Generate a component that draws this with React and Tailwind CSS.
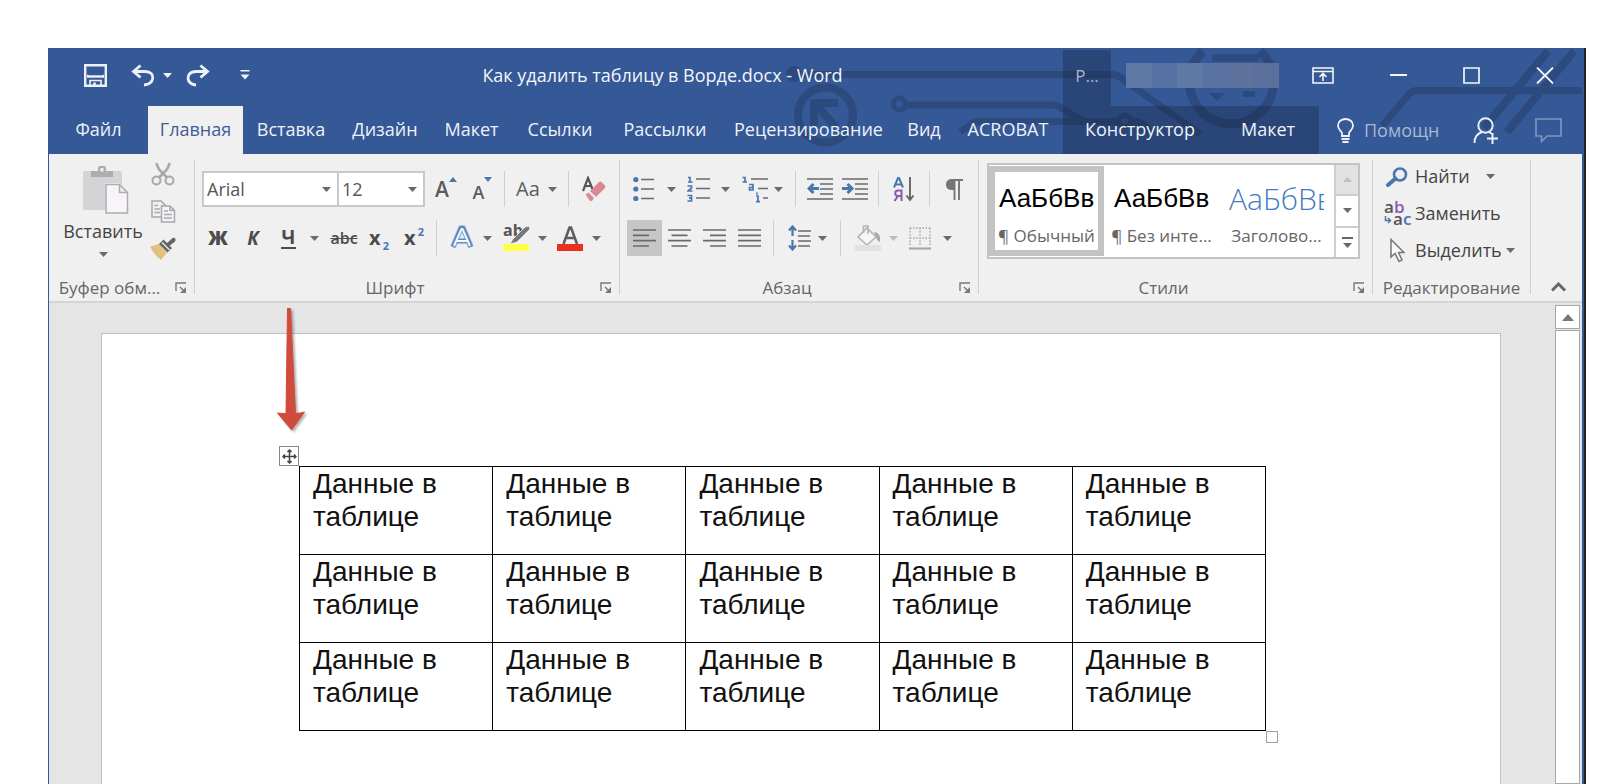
import React from "react";

const UI = "font-['Open_Sans','Noto_Sans',sans-serif]";

const rows = [0, 1, 2];
const cols = [0, 1, 2, 3, 4];

function Caret({ className = "text-[#6a6a6a]" }) {
  return (
    <svg width="9" height="5" viewBox="0 0 9 5" className={`shrink-0 ${className}`} aria-hidden="true">
      <path d="M0 0H9L4.5 5Z" fill="currentColor" />
    </svg>
  );
}

function Sep() {
  return <span className="mx-[6px] h-9 w-px shrink-0 bg-[#cfcfcf]" />;
}

function Tool({ label, w, children, className = "" }) {
  return (
    <button
      type="button"
      aria-label={label}
      className={`flex h-9 shrink-0 items-center justify-center ${w} ${className}`}
    >
      {children}
    </button>
  );
}

function Launcher({ label }) {
  return (
    <button type="button" aria-label={label} className="absolute right-[7px] top-1/2 -translate-y-1/2">
      <svg width="12" height="12" viewBox="0 0 12 12" fill="none" stroke="#777" strokeWidth="1.4" aria-hidden="true">
        <path d="M1 9V1H11" />
        <path d="M5 5L9 9" />
        <path d="M11 5V11H5Z" fill="#777" stroke="none" />
      </svg>
    </button>
  );
}

function Group({ title, launcher = true, className = "", children }) {
  return (
    <section className={`relative flex h-[134px] flex-col border-r border-[#cfcfcf] ${className}`}>
      <div className="h-[115px] shrink-0">{children}</div>
      <div className={`relative flex h-[26px] shrink-0 items-center justify-center text-[17px] leading-6 text-[#666] ${launcher ? "pr-6" : ""}`}>
        <span className="whitespace-nowrap">{title}</span>
        {launcher && <Launcher label={`${title}: параметры`} />}
      </div>
    </section>
  );
}

function Backdrop() {
  return (
    <svg
      className="pointer-events-none absolute right-0 top-0"
      width="802"
      height="105"
      viewBox="780 48 802 105"
      fill="none"
      stroke="#2d4a7f"
      strokeWidth="7"
      aria-hidden="true"
    >
      <circle cx="794" cy="74" r="8" fill="#2d4a7f" stroke="none" />
      <path d="M794 74.5H1112Q1118 75 1124 80L1200 134" />
      <circle cx="825.5" cy="115" r="27.5" strokeWidth="8" />
      <path d="M814 126V103H838M816 105L836 127" strokeWidth="8" />
      <circle cx="899.5" cy="104" r="6" strokeWidth="5" />
      <path d="M906 105H1052Q1058 105 1063 109L1082 121" />
      <path d="M1119 121.5H982Q974 121 970 125L960 132" />
      <circle cx="1125" cy="121" r="5.5" strokeWidth="5" />
      <path d="M1131 121.5H1136Q1144 122 1150 132" />
      <path d="M1203 51A42 42 0 1 0 1260 51" strokeWidth="9" />
      <path d="M1212 58H1259" />
      <path d="M1209 93H1225L1217 101Z" fill="#2d4a7f" stroke="none" />
      <path d="M1243 94H1255" strokeWidth="6" />
      <path d="M1382 126L1409 94Q1412 90.5 1418 90.5H1582" />
      <path d="M1548 51L1484 128M1574 51L1507 132" strokeWidth="8" />
    </svg>
  );
}

function TitleBar() {
  const mosaic = ["bg-[#5f78a6]", "bg-[#5670a4]", "bg-[#6078a4]", "bg-[#5a73a3]", "bg-[#5c719b]", "bg-[#5a6f9c]"];
  return (
    <div className="relative flex h-[58px] items-center pb-1">
      <div className="flex w-[217px] items-center pl-[35px] text-[#eef2f8]">
        <button type="button" aria-label="Сохранить" className="mr-6">
          <svg width="23" height="23" viewBox="0 0 23 23" fill="none" stroke="currentColor" strokeWidth="2.4" aria-hidden="true">
            <path d="M1.2 1.2H21.8V21.8H1.2Z" />
            <path d="M3 12.500H20" strokeWidth="2.400" />
            <path d="M3 11L5 13M20 11L18 13" strokeWidth="1.600" />
            <path d="M6 22V16.500H17V22" strokeWidth="1.600" />
            <path d="M10.500 18.500V22" strokeWidth="2.600" />
          </svg>
        </button>
        <button type="button" aria-label="Отменить" className="mr-[14px] flex items-center gap-2">
          <svg width="24" height="23" viewBox="0 0 24 23" fill="none" stroke="currentColor" strokeWidth="2.8" aria-hidden="true">
            <path d="M9.5 1.5L2.5 7.5L9.5 13.500" />
            <path d="M3 7.500H14.500C20 7.500 22.200 11 21.700 14.500C21 18.500 18 20.500 13 21" />
          </svg>
          <Caret className="text-[#eef2f8]" />
        </button>
        <button type="button" aria-label="Повторить" className="mr-[30px]">
          <svg width="24" height="23" viewBox="0 0 24 23" fill="none" stroke="currentColor" strokeWidth="2.8" aria-hidden="true">
            <path d="M14.5 1.5L21.5 7.5L14.5 13.500" />
            <path d="M21 7.500H10C4 7.500 1.800 11 2 14.500C2.500 18.500 5.500 20.500 10 21" />
          </svg>
        </button>
        <button type="button" aria-label="Настройка панели быстрого доступа">
          <svg width="10" height="10" viewBox="0 0 10 10" fill="currentColor" aria-hidden="true">
            <path d="M0.5 0H9.5V1.5H0.5ZM0.5 4.5H9.5L5 9.5Z" />
          </svg>
        </button>
      </div>
      <h1 className="flex-1 truncate pr-1 text-center text-[18px] text-[#f4f6fa]">Как удалить таблицу в Ворде.docx - Word</h1>
      <div className="mt-0.5 flex h-14 w-12 items-center justify-center self-start bg-black/20 pb-1 text-[17px] text-[#a9b7d2]">Р...</div>
      <div className="ml-[15px] flex h-[25px] w-[153px]">
        {mosaic.map((c, i) => (
          <span key={i} className={`flex-1 ${c}`} />
        ))}
      </div>
      <div className="flex w-[303px] items-center justify-between pl-[33px] pr-[28px] text-[#f4f6fa]">
        <button type="button" aria-label="Параметры отображения ленты">
          <svg width="22" height="17" viewBox="0 0 22 17" fill="none" stroke="currentColor" strokeWidth="1.6" aria-hidden="true">
            <path d="M1 1H21V16H1ZM1 4.5H21M11 14V7M7.5 10L11 6.5L14.5 10" />
          </svg>
        </button>
        <button type="button" aria-label="Свернуть" className="flex h-5 items-center">
          <svg width="17" height="2" viewBox="0 0 17 2" aria-hidden="true"><path d="M0 1H17" stroke="currentColor" strokeWidth="2" /></svg>
        </button>
        <button type="button" aria-label="Развернуть">
          <svg width="17" height="17" viewBox="0 0 17 17" fill="none" stroke="currentColor" strokeWidth="1.7" aria-hidden="true"><path d="M1 1H16V16H1Z" /></svg>
        </button>
        <button type="button" aria-label="Закрыть">
          <svg width="18" height="17" viewBox="0 0 18 17" stroke="currentColor" strokeWidth="1.8" aria-hidden="true"><path d="M1 0.5L17 16.5M17 0.5L1 16.5" /></svg>
        </button>
      </div>
    </div>
  );
}

function Tab({ w, children, active }) {
  return (
    <button
      type="button"
      role="tab"
      aria-selected={!!active}
      className={`flex h-full shrink-0 items-center justify-center whitespace-nowrap pb-0.5 ${w} ${
        active ? "bg-[#f0f0f0] text-[#3f5c98]" : "text-[#eef2f8]"
      }`}
    >
      {children}
    </button>
  );
}

function Tabs() {
  return (
    <div className="relative flex h-12 text-[18px]">
      <div role="tablist" className="flex flex-1">
        <Tab w="w-[99px]">Файл</Tab>
        <Tab w="w-[95px]" active>Главная</Tab>
        <Tab w="w-[96px]">Вставка</Tab>
        <Tab w="w-[92px]">Дизайн</Tab>
        <Tab w="w-[81px]">Макет</Tab>
        <Tab w="w-[96px]">Ссылки</Tab>
        <Tab w="w-[114px]">Рассылки</Tab>
        <Tab w="w-[173px]">Рецензирование</Tab>
        <Tab w="w-[58px]">Вид</Tab>
        <Tab w="w-[110px]">ACROBAT</Tab>
      </div>
      <div role="tablist" className="flex w-64 bg-black/20">
        <Tab w="w-[154px]">Конструктор</Tab>
        <Tab w="w-[102px]">Макет</Tab>
      </div>
      <div className="flex w-[263px] items-center pl-[18px] text-[#eef2f8]">
        <button type="button" className="mr-7 flex w-[108px] items-center gap-[10px] text-[#a9b7d2]">
          <svg width="17" height="25" viewBox="0 0 17 25" fill="none" stroke="#eef2f8" strokeWidth="1.8" aria-hidden="true" className="shrink-0">
            <path d="M5 18V15C4 12.5 1 11.5 1 7.5C1 3.5 4.5 1 8.5 1S16 3.5 16 7.5C16 11.5 13 12.5 12 15V18Z" />
            <path d="M4.5 21H12.5M5.5 24H11.5" />
          </svg>
          Помощн
        </button>
        <button type="button" aria-label="Общий доступ" className="mr-9 shrink-0">
          <svg width="26" height="27" viewBox="0 0 26 27" fill="none" stroke="currentColor" strokeWidth="1.9" aria-hidden="true">
            <circle cx="12.5" cy="8.5" r="7.2" />
            <path d="M1.5 26C1.5 20 4.5 16.5 9 15M16 15L19 17M19.5 16V27M14 21.5H25" />
          </svg>
        </button>
        <button type="button" aria-label="Примечания" className="shrink-0">
          <svg width="27" height="25" viewBox="0 0 27 25" fill="none" stroke="#7f94bd" strokeWidth="1.7" aria-hidden="true">
            <path d="M1 1H26V18H12L6.5 23.5V18H1Z" />
          </svg>
        </button>
      </div>
    </div>
  );
}

function Clipboard() {
  return (
    <Group title="Буфер обм..." className="w-[146px]">
      <div className="flex pl-3">
        <button type="button" className="flex w-[84px] flex-col items-center pt-[6px] text-[18px] text-[#444]">
          <svg width="46" height="48" viewBox="0 0 46 48" fill="none" className="mr-[-6px]" aria-hidden="true">
            <rect x="0" y="5" width="39" height="39" rx="2" fill="#d4d3d6" />
            <path d="M8 5H15V2Q15 0 17 0H21Q23 0 23 2V5H30V11H8Z" fill="#adacaf" />
            <rect x="17.5" y="2" width="3" height="3.5" fill="#f0f0f0" />
            <path d="M22 17H37L46 26V48H22Z" fill="#f0f0f0" />
            <path d="M23 18.5H36.5L44.5 26.5V47H23ZM36.5 18.5V26.5H44.5" fill="#f7f5f8" stroke="#adacaf" strokeWidth="1.5" />
          </svg>
          <span className="mb-[9px] mt-[5px] leading-6">Вставить</span>
          <Caret />
        </button>
        <div className="flex w-[36px] flex-col items-center gap-[14px] pt-[2px]">
          <button type="button" aria-label="Вырезать">
            <svg width="24" height="24" viewBox="0 0 24 24" fill="none" stroke="#a8a7aa" strokeWidth="2" aria-hidden="true">
              <circle cx="5.5" cy="18.5" r="4" />
              <circle cx="18.5" cy="18.5" r="4" />
              <path d="M5.5 1Q6 4 8.5 8L16 15.5M18.5 1Q18 4 15.5 8L8 15.5" strokeWidth="2.6" />
            </svg>
          </button>
          <button type="button" aria-label="Копировать">
            <svg width="25" height="23" viewBox="0 0 25 23" stroke="#a8a7aa" strokeWidth="1.5" fill="#f0f0f0" aria-hidden="true">
              <path d="M1 1H10L14.5 5.5V17H1Z" />
              <path d="M3.5 5.5H7M3.5 9H9M3.5 12.5H9" />
              <path d="M10.5 6H19L23.5 10.5V22H10.5Z" fill="#f5f3f6" />
              <path d="M13 11H17M13 14.5H21M13 18H21M19 6V10.5H23.5" fill="none" />
            </svg>
          </button>
          <button type="button" aria-label="Формат по образцу">
            <svg width="26" height="24" viewBox="0 0 26 24" aria-hidden="true">
              <path d="M0 9.5L9 7L17 15.5L11 23Q4 18 0 9.5Z" fill="#e3bf80" />
              <path d="M9 7L13.5 2.5L22 11L17.5 15.5Z" fill="#666" />
              <path d="M16.5 6.5L22 1.5Q24 0 25.5 2Q26 4 24.5 5L18.5 9.5Z" fill="#666" />
              <path d="M12 5.5L19.5 13" stroke="#f0f0f0" strokeWidth="1.2" />
            </svg>
          </button>
        </div>
      </div>
    </Group>
  );
}

function Combo({ label, value, w, caret }) {
  return (
    <div className={`relative h-9 shrink-0 border-2 border-[#c9c9c9] bg-white ${w}`}>
      <select aria-label={label} defaultValue={value} className="h-full w-full appearance-none bg-transparent pl-[3px] text-[18px] text-[#555] outline-none">
        <option>{value}</option>
      </select>
      <span className={`pointer-events-none absolute top-[14px] ${caret}`}><Caret /></span>
    </div>
  );
}

function FontGroup() {
  return (
    <Group title="Шрифт" className="w-[425px]">
      <div className="flex pl-[7px] pt-[11px]">
        <Combo label="Шрифт" value="Arial" w="w-[137px]" caret="right-[6px]" />
        <Combo label="Размер шрифта" value="12" w="w-[88px] -ml-0.5" caret="right-[6px]" />
        <Tool label="Увеличить размер" w="w-[42px]" className="text-[21px] text-[#5c5c5c]">
          <span className="pt-0.5 font-semibold">A</span>
          <svg width="8" height="5" viewBox="0 0 8 5" className="mb-5" aria-hidden="true"><path d="M0 5H8L4 0Z" fill="#4a76ae" /></svg>
        </Tool>
        <Tool label="Уменьшить размер" w="w-[31px]" className="text-[18px] text-[#5c5c5c]">
          <span className="pt-[6px] font-semibold">A</span>
          <svg width="8" height="5" viewBox="0 0 8 5" className="mb-5" aria-hidden="true"><path d="M0 0H8L4 5Z" fill="#4a76ae" /></svg>
        </Tool>
        <Sep />
        <Tool label="Регистр" w="w-[51px]" className="gap-2 text-[20px] text-[#5c5c5c]"><span>Aa</span><Caret /></Tool>
        <Sep />
        <Tool label="Очистить формат" w="w-[38px]">
          <svg width="24" height="26" viewBox="0 0 24 26" aria-hidden="true">
            <path d="M1 15L6 2L10.5 13M3 10H9" fill="none" stroke="#555" strokeWidth="2.2" />
            <path d="M8 15L17 6Q18.5 5 20 6.5L23 9.5Q24 11 22.5 12.5L14 21Z" fill="#d98994" />
            <path d="M3.5 18.5L6.5 16.5L12 22L10 25H8Z" fill="#d98994" />
          </svg>
        </Tool>
      </div>
      <div className="flex pl-[7px] pt-[13px] text-[#4c4c4c]">
        <Tool label="Полужирный" w="w-8" className="text-[19px] font-extrabold">Ж</Tool>
        <Tool label="Курсив" w="w-[38px]" className="text-[19px] font-bold italic">К</Tool>
        <Tool label="Подчёркнутый" w="w-14" className="gap-[14px] text-[19px] font-bold">
          <span className="border-b-2 border-[#4c4c4c] px-px leading-5">Ч</span><Caret />
        </Tool>
        <Tool label="Зачёркнутый" w="w-8" className="text-[16px] font-semibold line-through">abc</Tool>
        <Tool label="Подстрочный" w="w-[38px]" className="text-[20px] font-bold">
          x<span className="pl-0.5 pt-4 text-[11px] text-[#4a76ae]">2</span>
        </Tool>
        <Tool label="Надстрочный" w="w-8" className="text-[20px] font-bold">
          x<span className="pb-3 pl-0.5 text-[11px] text-[#4a76ae]">2</span>
        </Tool>
        <Sep />
        <Tool label="Текстовые эффекты" w="w-14" className="gap-[9px]">
          <svg width="24" height="26" viewBox="0 0 24 26" fill="none" strokeLinejoin="round" aria-hidden="true">
            <path d="M3 22L11 3H13L21 22M7 16H17" stroke="#c6d6ea" strokeWidth="6.5" />
            <path d="M3 22L11 3H13L21 22M7 16H17" stroke="#5b88bf" strokeWidth="4.600" />
            <path d="M4 21L11.5 4H12.5L20 21M7 16H17" stroke="#f5f8fc" strokeWidth="2" />
          </svg>
          <Caret />
        </Tool>
        <Tool label="Цвет выделения" w="w-[52px]" className="gap-2">
          <svg width="27" height="28" viewBox="0 0 27 28" className="overflow-visible" aria-hidden="true">
            <text x="0" y="12" fontSize="16" fontWeight="700" fill="#555" fontFamily="Open Sans, sans-serif">ab</text>
            <path d="M10 15L22 3L26 2L27 5L14 18L7 20Z" fill="#777" stroke="#f0f0f0" strokeWidth="0.8" />
            <path d="M0 20H26V27H0Z" fill="#ffff4a" />
          </svg>
          <Caret />
        </Tool>
        <Tool label="Цвет текста" w="w-14" className="gap-[9px]">
          <svg width="26" height="26" viewBox="0 0 26 26" aria-hidden="true">
            <path d="M6.5 19L12.5 2.5H14L20 19M9 13H17.5" fill="none" stroke="#5f5f5f" strokeWidth="2.6" />
            <path d="M0 19H26V26H0Z" fill="#e8311f" />
          </svg>
          <Caret />
        </Tool>
      </div>
    </Group>
  );
}

function Lines({ d, stroke = "#6a6a6a" }) {
  return (
    <svg width="23" height="18" viewBox="0 0 23 18" stroke={stroke} strokeWidth="1.7" aria-hidden="true">
      <path d={d} />
    </svg>
  );
}

function Indent({ right }) {
  return (
    <svg width="26" height="22" viewBox="0 0 26 22" fill="none" stroke="#6a6a6a" strokeWidth="1.7" aria-hidden="true">
      <path d="M0 1H26M13 6H26M13 11H26M13 16H26M0 21H26" />
      {right ? (
        <path d="M0 10.5H8M5.5 6L10 10.5L5.5 15" stroke="#4a76ae" strokeWidth="3" />
      ) : (
        <path d="M12 10.5H4M6.5 6L2 10.5L6.5 15" stroke="#4a76ae" strokeWidth="3" />
      )}
    </svg>
  );
}

function ParagraphGroup() {
  return (
    <Group title="Абзац" className="w-[359px]">
      <div className="flex pl-[7px] pt-[11px]">
        <Tool label="Маркеры" w="w-[54px]" className="gap-3">
          <svg width="22" height="26" viewBox="0 0 22 26" aria-hidden="true">
            <path d="M8 3.5H21M8 13H21M8 22.5H21" stroke="#6a6a6a" strokeWidth="1.7" />
            <circle cx="2.8" cy="3.5" r="2.6" fill="#4a76ae" /><circle cx="2.8" cy="13" r="2.6" fill="#4a76ae" /><circle cx="2.8" cy="22.5" r="2.6" fill="#4a76ae" />
          </svg>
          <Caret />
        </Tool>
        <Tool label="Нумерация" w="w-[54px]" className="gap-[10px]">
          <svg width="24" height="28" viewBox="0 0 24 28" aria-hidden="true">
            <path d="M9 4H23M9 13.5H23M9 23H23" stroke="#6a6a6a" strokeWidth="1.7" />
            <path d="M1 2.5H3V6.5M1 7H5.5M0.5 11H4.5V13L1 16H5.5M0.5 20.5H4.5V26H0.5M2 23.2H4.5" fill="none" stroke="#4a76ae" strokeWidth="1.7" />
          </svg>
          <Caret />
        </Tool>
        <Tool label="Многоуровневый список" w="w-[54px]" className="gap-[6px]">
          <svg width="26" height="28" viewBox="0 0 26 28" aria-hidden="true">
            <path d="M9 4H26M16 13.5H26M21 23H26" stroke="#6a6a6a" strokeWidth="1.7" />
            <path d="M0.5 2.5H3V6.5M0.5 7H5M7 9.5H11V15H7.500V12.5H11M14 21H16V26.5M14 26.7H18M15 17.5V19.5" fill="none" stroke="#4a76ae" strokeWidth="1.7" />
          </svg>
          <Caret />
        </Tool>
        <Sep />
        <Tool label="Уменьшить отступ" w="w-[35px]"><Indent /></Tool>
        <Tool label="Увеличить отступ" w="w-[35px]"><Indent right /></Tool>
        <Sep />
        <Tool label="Сортировка" w="w-[38px]">
          <svg width="22" height="26" viewBox="0 0 22 26" aria-hidden="true">
            <path d="M1 11.5L5 2H6L10 11.5M2.5 8.5H8.5" fill="none" stroke="#4a76ae" strokeWidth="2" />
            <path d="M8.5 25V14.5H5Q2.2 14.5 2.2 17.2T5 20H8.500M5 20L1.5 25" fill="none" stroke="#8a5ab0" strokeWidth="2" />
            <path d="M17 1V24M13.5 19.5L17 24L20.5 19.5" fill="none" stroke="#666" strokeWidth="1.9" />
          </svg>
        </Tool>
        <Sep />
        <Tool label="Отобразить все знаки" w="w-9">
          <svg width="17" height="21" viewBox="0 0 17 21" fill="none" aria-hidden="true">
            <path d="M8.5 11H6Q0 11 0 5.5T6 0H8.5Z" fill="#757575" />
            <path d="M5 1H17M8.5 0V21M13 1V21" stroke="#757575" strokeWidth="1.9" />
          </svg>
        </Tool>
      </div>
      <div className="flex pl-[7px] pt-[13px]">
        <Tool label="По левому краю" w="w-[35px]" className="bg-[#c6c6c6]"><Lines d="M0 1H23M0 6.3H16M0 11.6H23M0 17H16" /></Tool>
        <Tool label="По центру" w="w-[35px]"><Lines d="M0 1H23M3.5 6.3H19.5M0 11.6H23M3.5 17H19.5" /></Tool>
        <Tool label="По правому краю" w="w-[35px]"><Lines d="M0 1H23M7 6.3H23M0 11.6H23M7 17H23" /></Tool>
        <Tool label="По ширине" w="w-[35px]"><Lines d="M0 1H23M0 6.3H23M0 11.6H23M0 17H23" /></Tool>
        <Sep />
        <Tool label="Интервал" w="w-[54px]" className="gap-[6px]">
          <svg width="24" height="26" viewBox="0 0 24 26" fill="none" aria-hidden="true">
            <path d="M10 6H23M10 11H22M10 16H23M10 21H22" stroke="#6a6a6a" strokeWidth="1.7" />
            <path d="M4.5 11V2M1 5.5L4.5 1.5L8 5.5M4.5 15V24M1 20.5L4.5 24.5L8 20.5" stroke="#4a76ae" strokeWidth="2.2" />
          </svg>
          <Caret />
        </Tool>
        <Sep />
        <Tool label="Заливка" w="w-[58px]" className="gap-2">
          <svg width="26" height="26" viewBox="0 0 26 26" fill="none" aria-hidden="true">
            <path d="M3 12L12 3L21 12L12 20Z" fill="#f7f5f8" stroke="#b5b4b6" strokeWidth="1.6" />
            <path d="M8.5 8V1H13V9" stroke="#b5b4b6" strokeWidth="1.7" />
            <path d="M19 7Q26 7 25 17Q22 16 21 12Z" fill="#a8a7a9" />
            <path d="M0 20H26V26H0Z" fill="#e4e1e6" />
          </svg>
          <Caret className="text-[#bdbdbd]" />
        </Tool>
        <Tool label="Границы" w="w-[50px]" className="gap-3">
          <svg width="22" height="23" viewBox="0 0 22 23" fill="none" stroke="#a5a4a6" strokeWidth="1.5" aria-hidden="true">
            <path d="M1 1H21M1 11H21M1 1V19M11 1V19M21 1V19" strokeDasharray="1.5 1.6" />
            <path d="M0 21.5H22" strokeWidth="2" />
          </svg>
          <Caret />
        </Tool>
      </div>
    </Group>
  );
}

function StyleItem({ sample, name, selected, sampleClass }) {
  return (
    <button
      type="button"
      aria-pressed={!!selected}
      className={`flex h-[90px] w-[115px] shrink-0 flex-col overflow-hidden whitespace-nowrap border-6 text-left ${
        selected ? "border-[#c3c3c3]" : "border-transparent"
      }`}
    >
      <span className={`flex h-[52px] w-[99px] items-center overflow-hidden pl-1 ${sampleClass}`}>{sample}</span>
      <span className="h-6 self-center text-[17px] leading-6 text-[#666]">{name}</span>
    </button>
  );
}

function StylesGroup() {
  return (
    <Group title="Стили" className="min-w-[393px] flex-1">
      <div className="pl-2 pr-3 pt-[3px]">
        <div className="flex h-24 border-2 border-[#c3c3c3] bg-white">
          <div className="flex flex-1 overflow-hidden pt-px">
            <StyleItem selected sample="АаБбВв" name="¶ Обычный" sampleClass="font-['Liberation_Sans'] text-[26px] text-black" />
            <StyleItem sample="АаБбВв" name="¶ Без инте..." sampleClass="font-['Liberation_Sans'] text-[26px] text-black" />
            <StyleItem sample="АаБбВв" name="Заголово..." sampleClass="font-light text-[30px] text-[#3f7cc4]" />
          </div>
          <div className="flex w-6 flex-col divide-y-2 divide-[#cdcdcd] border-l-2 border-[#cdcdcd]">
            <button type="button" aria-label="Вверх" className="flex flex-1 items-center justify-center bg-[#e2e2e2]">
              <Caret className="rotate-180 text-[#c0c0c0]" />
            </button>
            <button type="button" aria-label="Вниз" className="flex flex-1 items-center justify-center"><Caret /></button>
            <button type="button" aria-label="Ещё" className="flex flex-1 flex-col items-center justify-center gap-1">
              <span className="h-0.5 w-[11px] bg-[#6a6a6a]" />
              <Caret />
            </button>
          </div>
        </div>
      </div>
    </Group>
  );
}

function EditingGroup() {
  return (
    <Group title="Редактирование" launcher={false} className="w-[158px]">
      <div className="flex flex-col pl-[11px] text-[18px] text-[#444]">
        <button type="button" className="flex h-[37px] items-center pb-1">
          <svg width="24" height="20" viewBox="0 0 24 20" fill="none" stroke="#4a76ae" className="mr-[7px]" aria-hidden="true">
            <circle cx="16" cy="7.5" r="6" strokeWidth="2.6" />
            <path d="M11.5 11.5L4 18" strokeWidth="4" strokeLinecap="round" />
          </svg>
          <span className="mr-4">Найти</span>
          <Caret />
        </button>
        <button type="button" className="flex h-[37px] items-center gap-1 pb-1">
          <svg width="27" height="27" viewBox="0 0 27 27" className="overflow-visible" fontFamily="Open Sans, sans-serif" fontSize="17" fontWeight="600" aria-hidden="true">
            <text x="0" y="13" fill="#555">a<tspan fill="#8a5ab0">b</tspan></text>
            <text x="9" y="25" fill="#555">a<tspan fill="#4a76ae">c</tspan></text>
            <path d="M1.5 16V20.5H6M4 18L6.5 20.5L4 23" fill="none" stroke="#4a76ae" strokeWidth="1.5" />
          </svg>
          <span>Заменить</span>
        </button>
        <button type="button" className="flex h-[37px] items-center pb-1">
          <svg width="15" height="25" viewBox="0 0 15 25" className="ml-[6px] mr-[10px] shrink-0" fill="#fbf9fc" stroke="#777" strokeWidth="1.5" aria-hidden="true">
            <path d="M1 1.5V19L5 15.5L9 23.5L12 22L8.5 14.5H14Z" />
          </svg>
          <span className="mr-1">Выделить</span>
          <Caret />
        </button>
      </div>
    </Group>
  );
}

function Ribbon() {
  return (
    <div className="flex h-[149px] border-b-2 border-[#d4d4d4] bg-[#f0f0f0] pt-1.5">
      <Clipboard />
      <FontGroup />
      <ParagraphGroup />
      <StylesGroup />
      <EditingGroup />
      <div className="flex w-[51px] items-end justify-center pb-[9px]">
        <button type="button" aria-label="Свернуть ленту" className="mr-[-4px]">
          <svg width="15" height="10" viewBox="0 0 15 10" fill="none" stroke="#666" strokeWidth="3" aria-hidden="true"><path d="M1 8.5L7.5 2L14 8.5" /></svg>
        </button>
      </div>
    </div>
  );
}

function DataTable() {
  return (
    <div className="relative">
      <table className="w-full table-fixed border-collapse font-['Liberation_Sans',Arial,sans-serif] text-[28px] leading-[33px] text-[#111]">
        <tbody>
          {rows.map((r) => (
            <tr key={r} className="h-[88px]">
              {cols.map((c) => (
                <td key={c} className="border border-black pl-[13px] pr-8 align-top">Данные в таблице</td>
              ))}
            </tr>
          ))}
        </tbody>
      </table>
      <button type="button" aria-label="Переместить таблицу" className="absolute -left-5 -top-5 flex size-5 items-center justify-center border border-[#888] bg-white">
        <svg width="15" height="15" viewBox="0 0 15 15" fill="none" stroke="#444" strokeWidth="1.5" aria-hidden="true">
          <path d="M7.5 1V14M1 7.5H14M5.5 3L7.5 1L9.5 3M5.5 12L7.5 14L9.5 12M3 5.5L1 7.5L3 9.5M12 5.5L14 7.5L12 9.5" />
        </svg>
      </button>
      <span className="absolute -bottom-3 -right-3 size-3 border border-[#a0a0a0] bg-white" />
      <svg
        className="pointer-events-none absolute -left-6 -top-[160px] drop-shadow-[2px_2px_1px_rgba(0,0,0,0.3)]"
        width="32"
        height="126"
        viewBox="0 0 32 126"
        aria-hidden="true"
      >
        <path d="M12.5 2.5H15.500L20.500 107.5Q26 107 29.5 106L16.5 124L2.5 107Q7 107.5 11 107.5Z" fill="#d14b3d" stroke="#d14b3d" strokeLinejoin="round" strokeWidth="1" />
      </svg>
    </div>
  );
}

export default function App() {
  return (
    <div className={`flex min-h-screen flex-col bg-white pl-12 pr-9 pt-12 ${UI}`}>
      <div className="flex flex-1 flex-col border-r-2 border-[#222]">
        <div className="flex flex-1 flex-col border-l border-r-2 border-[#355896]">
          <header className="relative bg-[#355896]">
            <Backdrop />
            <TitleBar />
            <Tabs />
          </header>
          <Ribbon />
          <main className="flex flex-1 bg-[#e5e5e5]">
            <div className="flex flex-1 flex-col pl-[52px] pr-[54px] pt-[30px]">
              <article className="flex-1 border border-b-0 border-[#c0c0c0] bg-white pb-12 pl-[197px] pr-[234px] pt-[132px]">
                <DataTable />
              </article>
            </div>
            <div className="mr-0.5 flex w-[25px] flex-col pt-[2px]">
              <button type="button" aria-label="Прокрутить вверх" className="flex h-[24px] items-center justify-center border border-[#a8a8a8] bg-white">
                <svg width="12" height="7" viewBox="0 0 12 7" aria-hidden="true"><path d="M0 7H12L6 0Z" fill="#777" /></svg>
              </button>
              <div className="mt-px flex-1 border border-[#a8a8a8] bg-white" />
            </div>
          </main>
        </div>
      </div>
    </div>
  );
}
